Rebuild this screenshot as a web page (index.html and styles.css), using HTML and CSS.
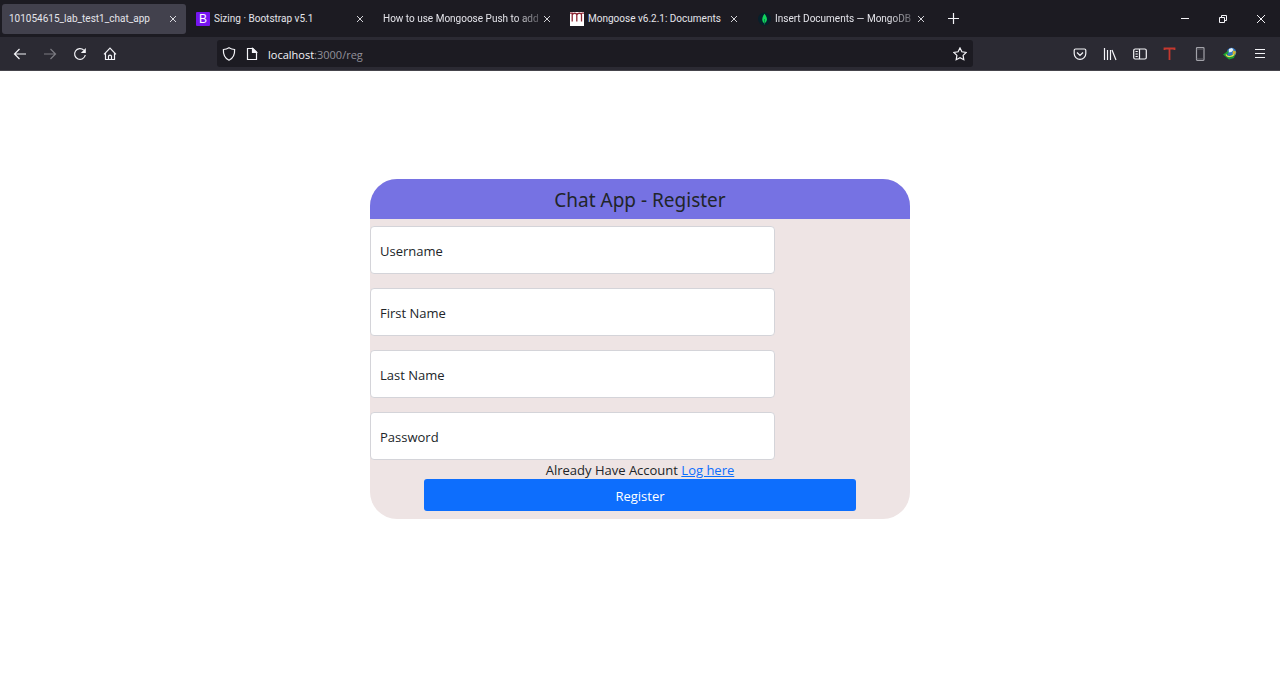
FILE: index.html
```html
<!DOCTYPE html>
<html lang="en">
<head>
<meta charset="utf-8">
<title>101054615_lab_test1_chat_app</title>
<link rel="stylesheet" href="styles.css">
</head>
<body>
<header class="browser">
  <div class="tab-bar">
    <div class="tab tab-active">
      <span class="tab-title">101054615_lab_test1_chat_app</span>
      <button class="tab-close" aria-label="Close tab"><svg width="8" height="8" viewBox="0 0 8 8"><path d="M1 1l6 6M7 1l-6 6"/></svg></button>
    </div>
    <div class="tab">
      <svg class="favicon" viewBox="0 0 14 14"><rect width="14" height="14" rx="1" fill="#7515f0"/><text x="7" y="11" text-anchor="middle" class="glyph-b">B</text></svg>
      <span class="tab-title">Sizing · Bootstrap v5.1</span>
      <button class="tab-close" aria-label="Close tab"><svg width="8" height="8" viewBox="0 0 8 8"><path d="M1 1l6 6M7 1l-6 6"/></svg></button>
    </div>
    <div class="tab">
      <span class="tab-title tab-title-fade">How to use Mongoose Push to add</span>
      <button class="tab-close" aria-label="Close tab"><svg width="8" height="8" viewBox="0 0 8 8"><path d="M1 1l6 6M7 1l-6 6"/></svg></button>
    </div>
    <div class="tab">
      <svg class="favicon" viewBox="0 0 14 14"><rect width="14" height="14" fill="#fff"/><path d="M0 1.200h2.200v8.300M2.200 3C3 .8 6.500 .5 6.800 3v6.500M6.800 3C7.500 .8 11.500 .5 11.500 3v6.500M11.500 1.200H14" fill="none" stroke="#8c2633" stroke-width="1.300"/></svg>
      <span class="tab-title">Mongoose v6.2.1: Documents</span>
      <button class="tab-close" aria-label="Close tab"><svg width="8" height="8" viewBox="0 0 8 8"><path d="M1 1l6 6M7 1l-6 6"/></svg></button>
    </div>
    <div class="tab">
      <svg class="favicon" viewBox="0 0 14 14"><circle cx="7.500" cy="7" r="6.500" fill="#06202b"/><path d="M7.500 1.800C11 6 10.500 9.500 7.500 11.500C4.500 9.500 4.500 6 7.500 1.800z" fill="#10d35c"/><path d="M7.500 7v5.500" stroke="#0a7a42" stroke-width=".8"/></svg>
      <span class="tab-title tab-title-fade">Insert Documents — MongoDB</span>
      <button class="tab-close" aria-label="Close tab"><svg width="8" height="8" viewBox="0 0 8 8"><path d="M1 1l6 6M7 1l-6 6"/></svg></button>
    </div>
    <button class="new-tab" aria-label="New tab"><svg width="11" height="11" viewBox="0 0 11 11"><path d="M5.500 0v11M0 5.500h11"/></svg></button>
    <div class="window-buttons">
      <button aria-label="Minimize"><svg width="10" height="10" viewBox="0 0 10 10"><path d="M1 4.500h8"/></svg></button>
      <button aria-label="Restore"><svg width="10" height="10" viewBox="0 0 10 10"><path d="M1.500 3.500h5v5h-5zM3.500 3.500v-2h5v5h-2"/></svg></button>
      <button aria-label="Close"><svg width="10" height="10" viewBox="0 0 10 10"><path d="M1 1l8 8M9 1l-8 8"/></svg></button>
    </div>
  </div>
  <div class="nav-bar">
    <div class="nav-buttons">
      <button aria-label="Back"><svg width="14" height="14" viewBox="0 0 14 14"><path d="M13 7H1.500M6.500 2l-5 5 5 5"/></svg></button>
      <button aria-label="Forward" disabled><svg width="14" height="14" viewBox="0 0 14 14"><path d="M1 7h11.500M7.500 2l5 5-5 5"/></svg></button>
      <button aria-label="Reload"><svg width="14" height="14" viewBox="0 0 14 14"><path d="M12.300 8A5.400 5.400 0 1 1 10.800 3.100"/><path d="M12.800 1v5H7.800z" fill="#f4f4f8" stroke="none"/></svg></button>
      <button aria-label="Home"><svg width="14" height="14" viewBox="0 0 14 14"><path d="M1 7.300L7 1.200l6 6.100M2.500 6.200v6.300h9V6.200M5.500 12.500V9.200q0-1 1.500-1t1.500 1v3.300"/></svg></button>
    </div>
    <div class="url-bar">
      <svg width="14" height="14" viewBox="0 0 14 14"><path d="M7 .8c2 1.200 3.600 1.600 5.600 1.700.3 5-1.200 8.700-5.600 10.700C2.600 11.200 1.100 7.500 1.400 2.500 3.400 2.400 5 2 7 .8z"/></svg>
      <svg width="14" height="14" viewBox="0 0 14 14"><path d="M2.500 1.500h5.500l3.500 3.500v7.500h-9z"/><path d="M7.500 1.500v4h4z" fill="#f4f4f8"/></svg>
      <span class="url-text"><span class="url-host">localhost</span>:3000/reg</span>
      <button aria-label="Bookmark this page"><svg width="14" height="14" viewBox="0 0 14 14"><path d="M7 .9l1.900 3.900 4.300.6-3.100 3 .7 4.300L7 10.700l-3.800 2 .7-4.300-3.100-3 4.300-.6z"/></svg></button>
    </div>
    <div class="toolbar">
      <button aria-label="Pocket"><svg width="14" height="14" viewBox="0 0 14 14"><path d="M2.500 2h9q1.300 0 1.300 1.300V6.500a5.800 5.800 0 0 1-11.600 0V3.300Q1.200 2 2.500 2zM4 5.500l3 3 3-3"/></svg></button>
      <button aria-label="Library"><svg width="14" height="14" viewBox="0 0 14 14"><path d="M1.500 1v12M4.500 3v10M7.500 3v10M9 3l4 10"/></svg></button>
      <button aria-label="Sidebars"><svg width="14" height="14" viewBox="0 0 14 14"><rect x=".7" y="2" width="12.600" height="10" rx="1.500"/><path d="M6.500 2v10M2.500 4.500h2.300M2.500 7h2.300M2.500 9.500h2.300"/></svg></button>
      <button aria-label="Text extension"><svg width="14" height="14" viewBox="0 0 14 14"><path d="M1.500 3V1.500h10V3M6.500 1.500V13" stroke="#c5382f" stroke-width="1.800"/></svg></button>
      <button aria-label="Mobile view"><svg width="14" height="14" viewBox="0 0 14 14"><rect x="3.500" y=".7" width="7.500" height="12.600" rx=".7" stroke="#a3a3aa"/><path d="M3.500 2.500h7.500M3.500 11.500h7.500" stroke="#66666d" stroke-width=".5"/></svg></button>
      <button aria-label="Download manager"><svg width="14" height="14" viewBox="0 0 14 14"><circle cx="8.500" cy="5.500" r="4.700" fill="#3278c8" stroke="none"/><path d="M6 2l3-1 1.500 2-2 2-3 .5z" fill="#e8f1f5" stroke="none"/><path d="M10 3.500l3 1-1 3.500-2.500-1z" fill="#d2b32e" stroke="none"/><path d="M0 7.500L5.500 3.500V6l-2 1.500L5 9l7-1.500-1 3.500-5 1.500-3-2.500z" fill="#1ca032" stroke="none"/><path d="M3 7.500q1 2.500 4 2 2.500-.3 4-2" stroke="#f0e05a"/></svg></button>
      <button aria-label="Application menu"><svg width="14" height="14" viewBox="0 0 14 14"><path d="M2 2.500h10M2 6.500h10M2 10.500h10"/></svg></button>
    </div>
  </div>
</header>
<main class="page">
  <form class="card">
    <h1 class="card-title">Chat App - Register</h1>
    <div class="card-body">
      <div class="fields">
        <div class="field"><input id="username" type="text"><label for="username">Username</label></div>
        <div class="field"><input id="firstname" type="text"><label for="firstname">First Name</label></div>
        <div class="field"><input id="lastname" type="text"><label for="lastname">Last Name</label></div>
        <div class="field"><input id="password" type="password"><label for="password">Password</label></div>
      </div>
      <p class="login-hint">Already Have Account <a href="#login">Log here</a></p>
      <button class="submit" type="button">Register</button>
    </div>
  </form>
</main>
</body>
</html>
```

FILE: styles.css
```css
* { box-sizing: border-box; }

body {
  margin: 0;
  padding-right: 6px;
  background: #fff;
  color: #212529;
  font-family: "Segoe UI", "Open Sans", sans-serif;
  font-size: 13px;
}

button {
  padding: 0;
  border: 0;
  background: none;
  color: inherit;
  font: inherit;
}

.browser { color: #f4f4f8; }

.browser svg {
  display: block;
  flex: none;
  fill: none;
  stroke: #f4f4f8;
  stroke-width: 1.2;
}

.browser button {
  display: flex;
  align-items: center;
  justify-content: center;
  flex: none;
}

.tab-bar {
  display: flex;
  align-items: center;
  gap: 3px;
  height: 37px;
  padding-left: 2px;
  background: #1c1b22;
}

.tab {
  display: flex;
  align-items: center;
  gap: 4px;
  flex: 0 1 184px;
  min-width: 0;
  height: 30px;
  padding: 0 9px 0 7px;
  border-radius: 3px;
  color: #e4e4ea;
  font-family: "Segoe UI", Roboto, sans-serif;
  font-size: 10px;
}

.tab-active { background: #42414d; }

.browser .favicon {
  width: 14px;
  height: 14px;
  stroke: none;
}

.glyph-b {
  fill: #fff;
  font: 12px "Liberation Sans", sans-serif;
}

.tab-title {
  flex: 1;
  overflow: hidden;
  line-height: 14px;
  white-space: nowrap;
}

.tab-title-fade {
  -webkit-mask-image: linear-gradient(to left, rgba(0, 0, 0, 0.3), #000 24px);
  mask-image: linear-gradient(to left, rgba(0, 0, 0, 0.3), #000 24px);
}

.tab-close svg { stroke-width: 1; opacity: 0.85; }

.new-tab { width: 32px; height: 30px; }

.window-buttons {
  display: flex;
  margin-left: auto;
}

.window-buttons button { width: 38px; height: 30px; }

.browser .window-buttons svg { stroke-width: 1; }

.nav-bar {
  display: flex;
  align-items: center;
  height: 34px;
  border-bottom: 1px solid #45444b;
  background: #2b2a33;
}

.nav-buttons,
.toolbar {
  display: flex;
  flex: none;
}

.nav-buttons { width: 217px; padding-left: 5px; }

.nav-buttons button,
.toolbar button { width: 30px; height: 28px; }

.nav-buttons button:disabled { opacity: 0.4; }

.url-bar {
  display: flex;
  align-items: center;
  gap: 9px;
  flex: 1;
  max-width: 756px;
  height: 27px;
  padding: 0 6px 0 5px;
  border-radius: 3px;
  background: #1c1b22;
}

.url-text {
  flex: 1;
  padding-top: 2px;
  color: #92919a;
  font-size: 11px;
}

.url-host { color: #f4f4f8; }

.toolbar { margin-left: auto; padding-right: 5px; }

.page {
  display: flex;
  justify-content: center;
  padding: 108px 16px 24px;
}

.card {
  width: 100%;
  max-width: 540px;
  overflow: hidden;
  border-radius: 27px;
  background: #eee4e4;
}

.card-title {
  margin: 0;
  padding-top: 2px;
  background: #7672e3;
  font-family: "Segoe UI", "Noto Sans", sans-serif;
  font-size: 19px;
  font-weight: 400;
  line-height: 38px;
  text-align: center;
}

.card-body { padding: 7px 0 8px; }

.fields {
  display: grid;
  gap: 14px;
  width: 75%;
}

.field { position: relative; }

.field input {
  display: block;
  width: 100%;
  height: 48px;
  padding: 12px 10px 0;
  border: 1px solid #d4d4d9;
  border-radius: 4px;
  background: #fff;
  font: inherit;
}

.field label {
  position: absolute;
  top: 0;
  left: 10px;
  line-height: 50px;
}

.login-hint {
  margin: 0;
  padding-top: 2px;
  line-height: 17px;
  text-align: center;
}

.login-hint a { color: #0d6efd; }

.submit {
  display: block;
  width: 80%;
  height: 32px;
  margin: 0 auto;
  padding-top: 2px;
  border-radius: 3px;
  background: #0d6efd;
  color: #fff;
}
```
